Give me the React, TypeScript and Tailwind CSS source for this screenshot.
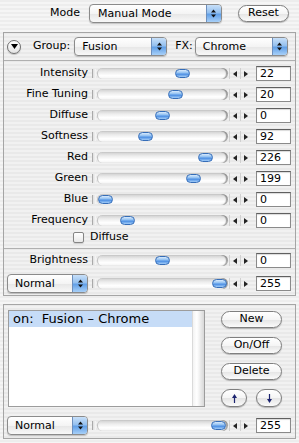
import React from "react";

// slider rows of the effect panel (thumb = centre x of the knob on the page)
const sliders = [
  { label: "Intensity", value: "22", thumb: 182 },
  { label: "Fine Tuning", value: "20", thumb: 175 },
  { label: "Diffuse", value: "0", thumb: 162 },
  { label: "Softness", value: "92", thumb: 145 },
  { label: "Red", value: "226", thumb: 205 },
  { label: "Green", value: "199", thumb: 193 },
  { label: "Blue", value: "0", thumb: 105 },
  { label: "Frequency", value: "0", thumb: 127 },
];

const Popup = ({ label, className }: { label: string; className: string }) => (
  <div
    className={`flex h-[19px] shrink-0 items-stretch rounded-[4px] border border-[#8b8b8b] bg-[linear-gradient(#ffffff,#f4f4f4_50%,#e6e6e6_51%,#f8f8f8)] shadow-[0_1px_1px_rgba(0,0,0,0.2)] ${className}`}
  >
    <span className="flex-1 truncate pl-[7px] leading-[17px]">{label}</span>
    <span className="flex w-[15px] items-center justify-center rounded-r-[3px] border-l border-[#6d8fbd] bg-[linear-gradient(#c8e0f9,#94c0ef_45%,#62a0e7_55%,#a8d0f8)]">
      <svg width="7" height="11" viewBox="0 0 7 11">
        <path d="M3.5 1.5 L6 4.5 H1Z M3.5 9.5 L6 6.5 H1Z" fill="#111" />
      </svg>
    </span>
  </div>
);

const Pill = ({
  children,
  className,
}: {
  children: React.ReactNode;
  className: string;
}) => (
  <div
    className={`flex shrink-0 items-center justify-center rounded-full border border-[#7f7f7f] bg-[linear-gradient(#ffffff,#f5f5f5_50%,#e4e4e4_51%,#fbfbfb)] shadow-[0_1px_1px_rgba(0,0,0,0.25)] ${className}`}
  >
    {children}
  </div>
);

const Slider = ({ thumb }: { thumb: number }) => (
  <div className="relative h-[11px] w-[136px] shrink-0">
    <div className="absolute left-0 top-[1px] h-[9px] w-[4px] border-l border-[#a9a9a9] bg-[linear-gradient(90deg,#dedede,#f8f8f8)]" />
    <div className="absolute left-[5px] right-0 top-0 h-[11px] rounded-full border-l border-[#c2c2c2] bg-[linear-gradient(#cdcdcd,#ececec_35%,#ffffff_70%,#f2f2f2)] shadow-[inset_-2px_0_1px_rgba(0,0,0,0.35)]" />
    <div
      className="absolute top-[1px] h-[9px] w-[15px] rounded-full border border-[#356db8] bg-[linear-gradient(#d8eafc,#92c1f2_40%,#4d8fe3_60%,#a2ccf7)]"
      style={{ left: thumb - 92 - 7 }}
    />
  </div>
);

const Steppers = () => (
  <div className="ml-[1px] flex h-[11px] w-[22px] shrink-0">
    <div className="flex flex-1 items-center justify-center border-l border-[#d0d0d0]">
      <svg width="4" height="6" viewBox="0 0 4 6">
        <path d="M0 3 L4 0 V6Z" fill="#222" />
      </svg>
    </div>
    <div className="flex flex-1 items-center justify-center border-l border-[#d0d0d0]">
      <svg width="4" height="6" viewBox="0 0 4 6">
        <path d="M4 3 L0 0 V6Z" fill="#222" />
      </svg>
    </div>
  </div>
);

const Field = ({ value }: { value: string }) => (
  <div className="ml-[5px] flex h-[15px] w-[35px] shrink-0 items-center border border-[#8a8a8a] border-t-[#5f5f5f] bg-white pl-[3px] leading-none shadow-[inset_0_1px_1px_rgba(0,0,0,0.15)]">
    {value}
  </div>
);

const Arrow = ({ up }: { up?: boolean }) => (
  <svg width="7" height="11" viewBox="0 0 7 11">
    {up ? (
      <path d="M3.5 1 L6 5 H4.1 V10 H2.9 V5 H1Z" fill="#1c2470" />
    ) : (
      <path d="M3.5 10 L6 6 H4.1 V1 H2.9 V6 H1Z" fill="#1c2470" />
    )}
  </svg>
);

export default function App() {
  return (
    <div className="h-[443px] w-[299px] overflow-hidden bg-[repeating-linear-gradient(180deg,#ededed_0px,#ededed_2px,#f5f5f5_2px,#f5f5f5_4px)] font-['DejaVu_Sans',sans-serif] text-[11px] text-black">
      {/* Mode row */}
      <div className="mt-[4px] flex h-[19px] items-center">
        <span className="ml-[50px]">Mode</span>
        <Popup label="Manual Mode" className="ml-[9px] w-[133px] pl-px" />
        <Pill className="ml-[16px] h-[17px] w-[51px]">Reset</Pill>
      </div>

      {/* Effect panel */}
      <div className="mx-[3px] mt-[9px] border border-[#a5a5a5] bg-black/[0.015]">
        <div className="mt-[4px] flex h-[19px] items-center">
          <div className="ml-[3px] flex h-[14px] w-[14px] items-center justify-center rounded-full border border-[#6f6f6f] bg-[linear-gradient(#ffffff,#e4e4e4)] shadow-[0_1px_1px_rgba(0,0,0,0.2)]">
            <svg width="7" height="5" viewBox="0 0 7 5">
              <path d="M0 0 H7 L3.5 5Z" fill="#000" />
            </svg>
          </div>
          <span className="ml-[12px]">Group:</span>
          <Popup label="Fusion" className="ml-[4px] w-[93px]" />
          <span className="ml-[8px]">FX:</span>
          <Popup label="Chrome" className="ml-[2px] w-[93px]" />
        </div>

        <div className="mt-[4px] border-t border-[#b0b0b0]" />

        <div className="pt-[2px]">
          {sliders.map((s) => (
            <div key={s.label} className="flex h-[21px] items-center">
              <div className="w-[84px] shrink-0 text-right">{s.label}</div>
              <div className="ml-[4px] flex items-center">
                <Slider thumb={s.thumb} />
                <Steppers />
                <Field value={s.value} />
              </div>
            </div>
          ))}
        </div>

        <div className="flex h-[13px] items-center">
          <div className="ml-[69px] h-[11px] w-[11px] rounded-[2px] border border-[#858585] bg-[linear-gradient(#ffffff,#e9e9e9)] shadow-[0_1px_1px_rgba(0,0,0,0.15)]" />
          <span className="ml-[6px]">Diffuse</span>
        </div>

        <div className="mt-[4px] border-t border-[#b0b0b0]" />

        <div className="mt-px flex h-[21px] items-center">
          <div className="w-[84px] shrink-0 text-right">Brightness</div>
          <div className="ml-[4px] flex items-center">
            <Slider thumb={162} />
            <Steppers />
            <Field value="0" />
          </div>
        </div>
        <div className="mb-px mt-[2px] flex h-[21px] items-center">
          <Popup label="Normal" className="ml-[3px] w-[81px]" />
          <div className="ml-[4px] flex items-center">
            <Slider thumb={219} />
            <Steppers />
            <Field value="255" />
          </div>
        </div>
      </div>

      {/* Layer list panel */}
      <div className="mx-[3px] mt-[8px] border border-[#a5a5a5] bg-black/[0.015] pb-[2px] pt-[5px]">
        <div className="flex">
          <div className="ml-[4px] flex h-[97px] w-[197px] border border-[#9c9c9c] bg-white">
            <div className="flex-1">
              <div className="h-[16px] whitespace-pre bg-[#c6dcf7] pl-[4px] text-[13px] leading-[16px]">
                {"on:  Fusion \u2013 Chrome"}
              </div>
            </div>
            <div className="w-[12px] border-l border-[#dadada] bg-[linear-gradient(90deg,#f3f3f3,#ffffff_35%,#d8d8d8)]" />
          </div>
          <div className="ml-[16px] mt-px flex flex-col gap-[9px]">
            <Pill className="h-[17px] w-[61px]">New</Pill>
            <Pill className="h-[17px] w-[61px]">On/Off</Pill>
            <Pill className="h-[17px] w-[61px]">Delete</Pill>
            <div className="flex gap-[9px]">
              <Pill className="h-[18px] w-[26px]">
                <Arrow up />
              </Pill>
              <Pill className="h-[18px] w-[26px]">
                <Arrow />
              </Pill>
            </div>
          </div>
        </div>

        <div className="mt-[8px] flex h-[21px] items-center">
          <Popup label="Normal" className="ml-[3px] w-[81px]" />
          <div className="ml-[4px] flex items-center">
            <Slider thumb={218} />
            <Steppers />
            <Field value="255" />
          </div>
        </div>
      </div>
    </div>
  );
}
